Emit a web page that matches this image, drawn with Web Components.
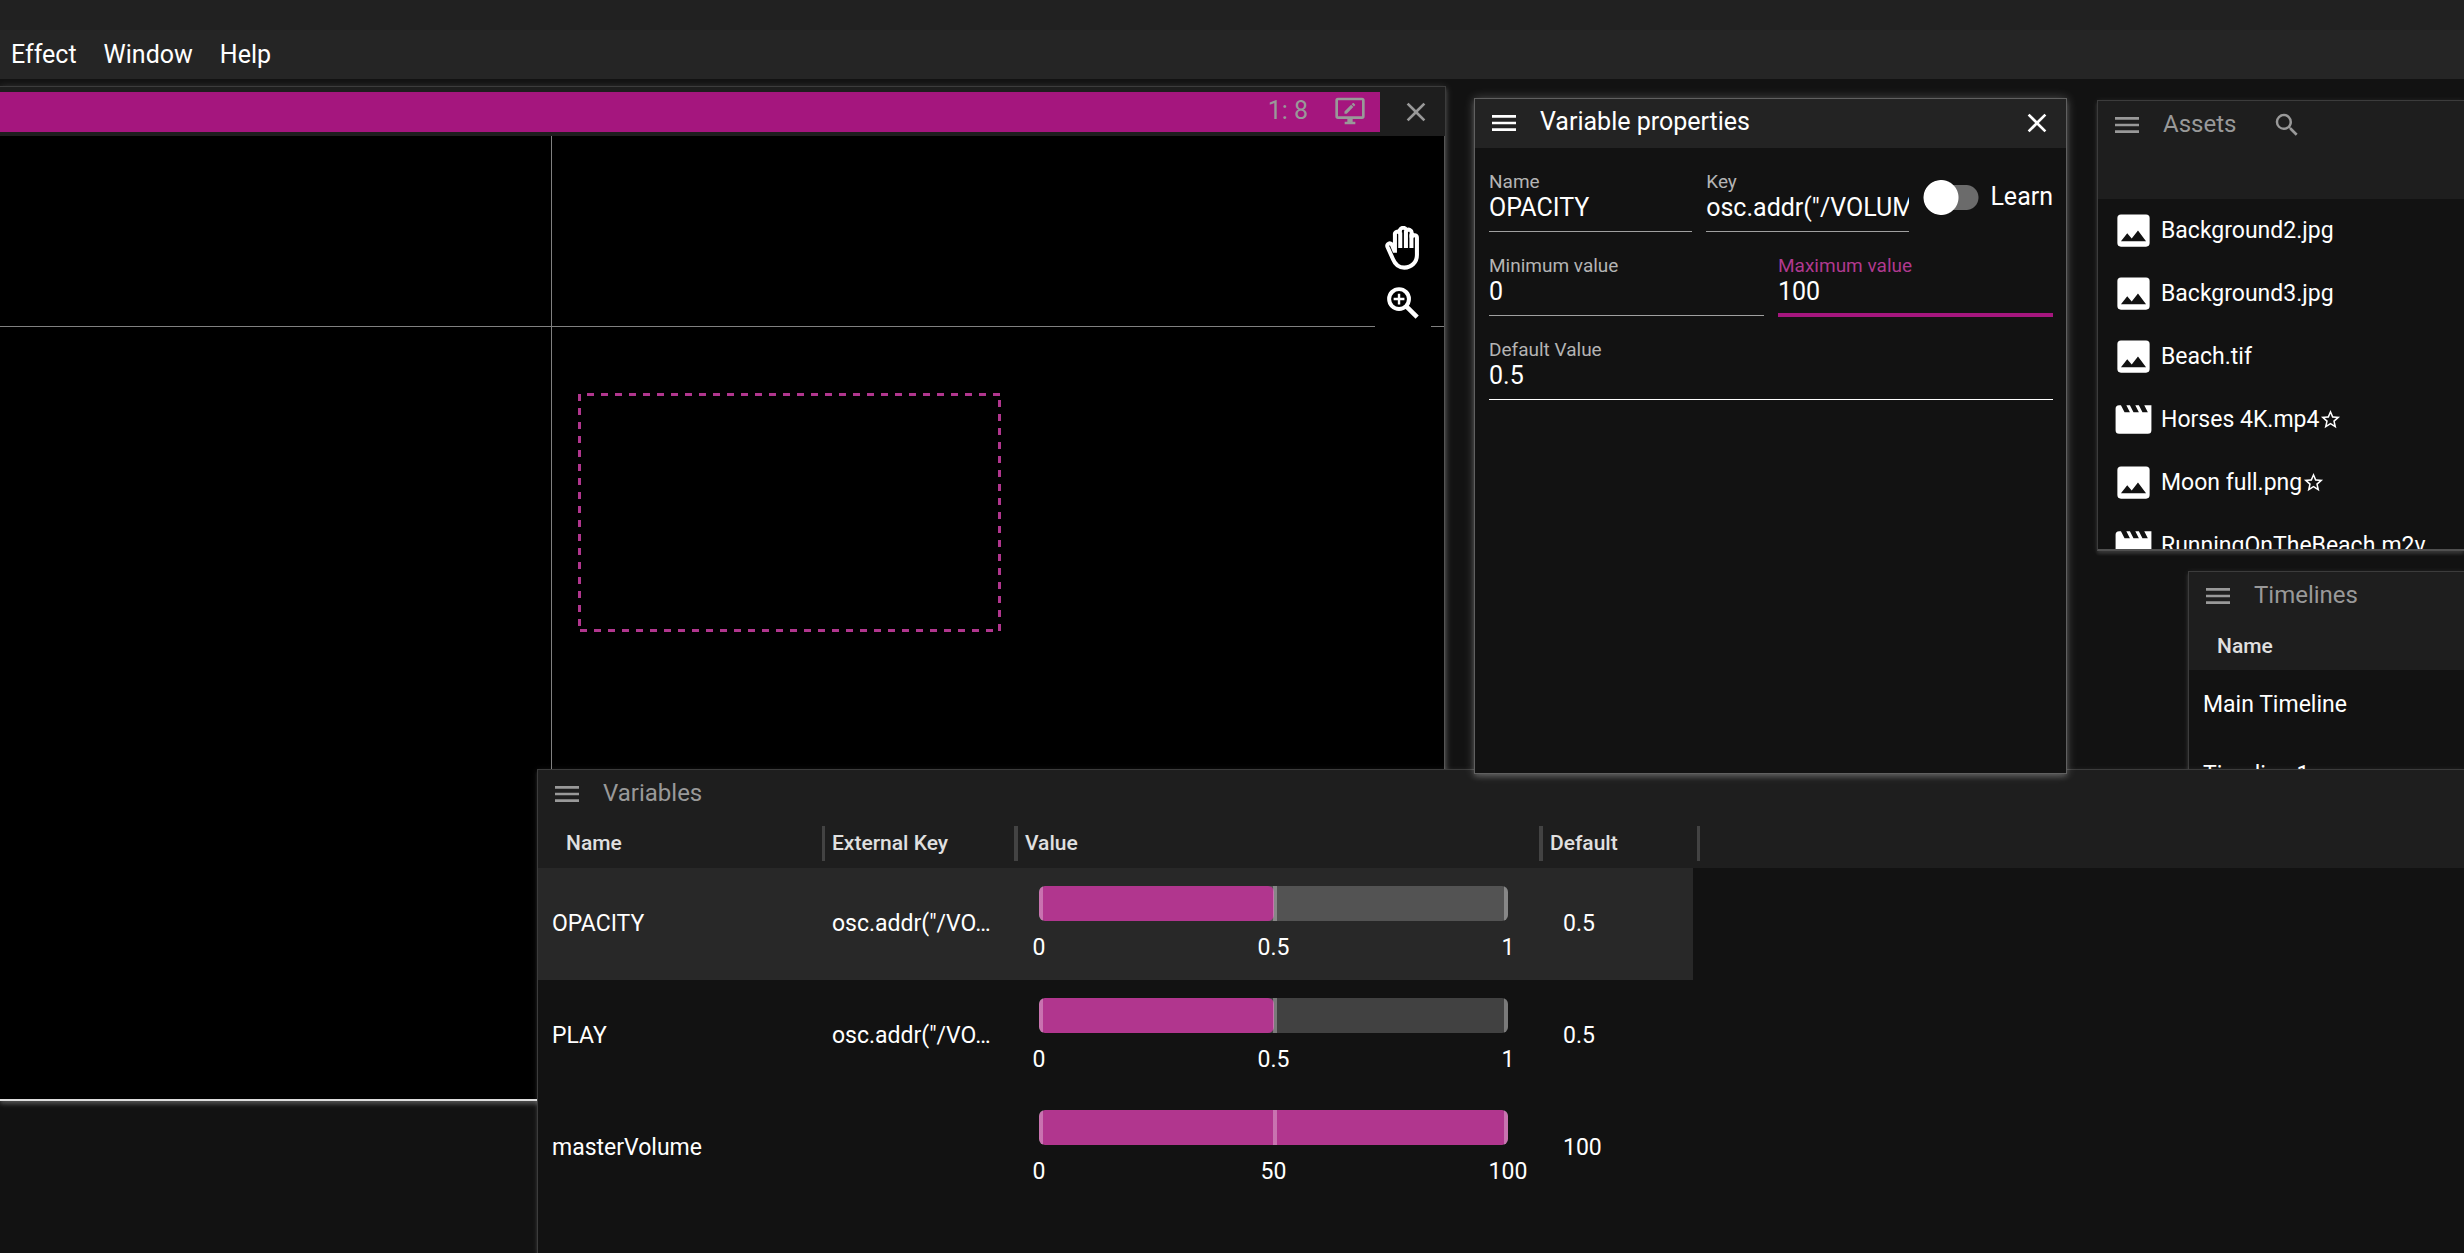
<!DOCTYPE html>
<html lang="en">
<head>
<meta charset="utf-8">
<title>Variables</title>
<style>
html,body{height:100%;margin:0}
body{background:#121212;color:#fff;font-family:Roboto,"Liberation Sans",sans-serif;font-size:23px;overflow:hidden}
</style>
</head>
<body>
<media-app></media-app>
<script>
const define = (name, html, setup) => {
  const tpl = document.createElement('template');
  tpl.innerHTML = html;
  customElements.define(name, class extends HTMLElement {
    connectedCallback() {
      if (this.shadowRoot) return;
      this.attachShadow({mode: 'open'}).appendChild(tpl.content.cloneNode(true));
      if (setup) setup(this, this.shadowRoot);
    }
  });
};

const ICONS = {
  menu: '<path d="M3 6h18v2H3zM3 11h18v2H3zM3 16h18v2H3z"/>',
  close: '<path d="M19 6.41 17.59 5 12 10.59 6.41 5 5 6.41 10.59 12 5 17.59 6.41 19 12 13.41 17.59 19 19 17.59 13.41 12z"/>',
  search: '<path d="M9.5 3A6.5 6.5 0 0 1 16 9.5c0 1.61-.59 3.09-1.56 4.23l.27.27h.79l5 5-1.5 1.5-5-5v-.79l-.27-.27A6.516 6.516 0 0 1 9.5 16a6.5 6.5 0 0 1 0-13m0 2C7 5 5 7 5 9.5S7 14 9.5 14 14 12 14 9.5 12 5 9.5 5z"/>',
  image: '<path d="M8.5 13.5l2.5 3 3.500-4.500 4.500 6H5m16 1V5a2 2 0 0 0-2-2H5a2 2 0 0 0-2 2v14a2 2 0 0 0 2 2h14a2 2 0 0 0 2-2z"/>',
  movie: '<path d="M18 4l2 4h-3l-2-4h-2l2 4h-3l-2-4H8l2 4H7L5 4H4a2 2 0 0 0-2 2v12a2 2 0 0 0 2 2h16a2 2 0 0 0 2-2V4z"/>',
  star: '<path d="M12 15.390l-3.760 2.270.99-4.280-3.320-2.880 4.380-.370L12 6.090l1.710 4.040 4.380.370-3.320 2.880.99 4.280M22 9.240l-7.190-.610L12 2 9.190 8.630 2 9.240l5.450 4.730L5.820 21 12 17.270 18.180 21l-1.640-7.030z"/>',
  screen: '<path d="M21 16H3V4h18m0-2H3a2 2 0 0 0-2 2v12a2 2 0 0 0 2 2h7v2H8v2h8v-2h-2v-2h7a2 2 0 0 0 2-2V4a2 2 0 0 0-2-2z"/><path transform="translate(6.500 4.600) scale(.45)" d="M3 17.250V21h3.750L17.810 9.930l-3.750-3.740zM20.710 7.040a1 1 0 0 0 0-1.410l-2.340-2.340a1 1 0 0 0-1.410 0l-1.830 1.830 3.750 3.750z"/>',
  zoom: '<g fill="none" stroke="currentColor" stroke-width="2.800"><circle cx="9.200" cy="9.200" r="7"/><path stroke-width="3.200" d="M14.500 14.500 22 22"/><path stroke-width="1.700" d="M9.200 5.400v7.600M5.400 9.200h7.600"/></g>',
  hand: '<g fill="none" stroke="currentColor" stroke-width="2.200" stroke-linejoin="round"><path d="M7.600 14.600V4.800a1.500 1.500 0 0 1 2.700-1.100V3a1.800 1.800 0 0 1 3.600-.4 1.600 1.600 0 0 1 2.800 1.300V6a1.500 1.500 0 0 1 2.900.6v9.200c0 4-3 6.900-6.900 6.900-3.100 0-5-1.700-6.200-4.700L3.500 11.300a1.300 1.300 0 0 1 2.500-1l1.600 3.800"/><path d="M10.500 3.500V12M13.600 2.500V12M16.600 4.500V12"/></g>'
};

define('ui-icon', `<style>:host{display:block;flex:none;width:32px;height:32px}svg{display:block;width:100%;height:100%;fill:currentColor}</style><svg viewBox="0 0 24 24" aria-hidden="true"></svg>`,
  (el, root) => { root.querySelector('svg').innerHTML = ICONS[el.getAttribute('name')]; });

define('menu-bar', `<style>
:host{display:block;background:#212121;padding-top:30px}
nav{display:flex;gap:27px;height:49px;align-items:center;padding-left:11px;background:#252525}
button{all:unset;font:400 25px/28px Roboto,sans-serif;color:#fff;cursor:default}
</style><nav><button>Effect</button><button>Window</button><button>Help</button></nav>`);

define('app-window', `<style>
:host{display:flex;flex-direction:column;box-sizing:border-box;position:absolute;background:#121212;border:1px solid #3c3c3c;overflow:hidden;
 --head:#1e1e1e;--ink:#999;box-shadow:0 3px 3px rgba(255,255,255,.1),0 1px 6px rgba(255,255,255,.1)}
:host([active]){--head:#232323;--ink:#fff;border-color:#606060;box-shadow:0 3px 5px rgba(255,255,255,.16),0 0 10px rgba(255,255,255,.24)}
header{flex:none;background:var(--head)}
.bar{display:flex;align-items:center;box-sizing:border-box;height:49px;padding:0 13px 2px;color:var(--ink);font-size:24px;line-height:28px}
button{all:unset;display:block}
h2{font:inherit;margin:0 0 0 20px;padding-bottom:2px}
:host([active]) h2{font-size:25px}
</style><header><div class="bar"><button aria-label="Menu"><ui-icon name="menu"></ui-icon></button><h2></h2><slot name="actions"></slot></div><slot name="sub"></slot></header><slot></slot>`,
  (el, root) => { root.querySelector('h2').textContent = el.getAttribute('heading'); });

define('stage-view', `<style>
:host{display:flex;flex-direction:column;box-sizing:border-box;position:absolute;background:#1e1e1e;border:1px solid #3c3c3c;border-left:0;border-bottom:2px solid #ddd;
 box-shadow:0 3px 4px rgba(255,255,255,.18),0 1px 8px rgba(255,255,255,.16)}
header{display:flex;align-items:center;height:49px;gap:20px;padding-right:13px;color:#999}
.title{flex:1;box-sizing:border-box;height:40px;display:flex;align-items:center;justify-content:flex-end;gap:26px;padding:0 14px 2px 0;background:#a5167e;font-size:25px}
button{all:unset;display:block}
.canvas{flex:1;position:relative;background:#000;overflow:hidden;border-right:1px solid #555}
svg{position:absolute;inset:0;width:100%;height:100%}
.tools{position:absolute;right:13px;top:83px;display:flex;flex-direction:column;align-items:center;gap:16px;box-sizing:border-box;padding-top:7px;width:56px;height:112px;background:#000}
.pan{width:44px;height:44px}
.zoom{width:34px;height:34px}
</style>
<header><div class="title"><span>1: 8</span><ui-icon name="screen"></ui-icon></div><button aria-label="Close"><ui-icon name="close"></ui-icon></button></header>
<div class="canvas"><svg aria-hidden="true"><path d="M551.500 0V2000M0 190.500H2000" stroke="#808080"/><path d="M587 258.500H1000M999.500 264V495M580 494.500H993M579.500 258V433M579.500 441V490" fill="none" stroke="#b1368e" stroke-width="3" stroke-dasharray="7 7"/></svg>
<div class="tools"><button aria-label="Pan"><ui-icon class="pan" name="hand"></ui-icon></button><button aria-label="Zoom in"><ui-icon class="zoom" name="zoom"></ui-icon></button></div></div>`);

define('text-field', `<style>
:host{display:block;flex:1;min-width:0}
label{display:block;font-size:19px;line-height:20px;color:#b4b4b4}
input{display:block;box-sizing:border-box;width:100%;height:40px;margin:0;padding:0 0 9px;border:0;border-bottom:1px solid #a0a0a0;border-radius:0;outline:0;background:none;color:#fff;font:25px Roboto,sans-serif}
:host([strong]) input{border-color:#fff}
:host([focused]) label{color:#b0398f}
:host([focused]) input{height:41px;margin-bottom:-1px;padding-bottom:7px;border-bottom:4px solid #a5167e}
</style><label for="f"></label><input id="f" type="text">`,
  (el, root) => {
    root.querySelector('label').textContent = el.getAttribute('label');
    root.querySelector('input').value = el.getAttribute('value');
  });

define('toggle-switch', `<style>
:host{display:block}
label{display:flex;align-items:center;gap:11px;font-size:25px;line-height:28px;height:50px}
input{appearance:none;margin:0;width:56px;height:35px;display:flex;align-items:center;border-radius:18px;
 background:radial-gradient(circle at 18px 50%,#fff 17px,transparent 18px),linear-gradient(#6b6b6b,#6b6b6b) 18px 5px/26px 25px no-repeat,radial-gradient(circle at 43px 50%,#6b6b6b 12px,transparent 13px)}
</style><label><input type="checkbox"><slot></slot></label>`);

define('asset-item', `<style>
:host{display:flex;align-items:center;height:63px;padding-left:14px;gap:6px;flex:none;white-space:nowrap}
.kind{width:43px;height:43px}
.name{display:flex;align-items:center;line-height:28px}
.star{width:23px;height:23px}
</style><ui-icon class="kind"></ui-icon><div class="name"><slot></slot></div>`,
  (el, root) => {
    root.querySelector('.kind').shadowRoot.querySelector('svg').innerHTML = ICONS[el.getAttribute('kind')];
    if (el.hasAttribute('starred')) {
      const star = document.createElement('ui-icon');
      star.setAttribute('name', 'star');
      star.className = 'star';
      root.querySelector('.name').append(star);
    }
  });

define('value-slider', `<style>
:host{display:block}
.bar{display:grid;height:35px;border-radius:6px;overflow:hidden;background:rgba(255,255,255,.2)}
.bar>*{grid-area:1/1}
.fill{background:#b1368e;border-radius:6px}
input{appearance:none;width:100%;height:35px;margin:0;--t:rgba(255,255,255,.3);
 background:linear-gradient(90deg,var(--t) 4px,transparent 4px,transparent 50%,var(--t) 50%,var(--t) calc(50% + 4px),transparent calc(50% + 4px),transparent calc(100% - 4px),var(--t) calc(100% - 4px))}
input::-webkit-slider-thumb{appearance:none;width:4px;height:35px;background:none}
.scale{display:flex;justify-content:space-between;margin-top:13px;line-height:27px}
.scale span{width:0;display:flex;justify-content:center}
</style><div class="bar"><div class="fill"></div><input type="range" min="0" aria-label="Value"></div><div class="scale"><span></span><span></span><span></span></div>`,
  (el, root) => {
    const max = +el.getAttribute('max'), value = +el.getAttribute('value');
    const input = root.querySelector('input');
    input.max = max; input.step = max / 100; input.value = value;
    root.querySelector('.fill').style.width = value / max * 100 + '%';
    [0, max / 2, max].forEach((n, i) => { root.querySelectorAll('span')[i].textContent = n; });
  });

define('variable-table', `<style>
:host{display:block;background:linear-gradient(#1e1e1e 49px,transparent 49px)}
table{table-layout:fixed;width:1162px;border-collapse:collapse}
th{height:49px;padding:0;text-align:left;font-weight:500;font-size:21px;color:#e0e0e0}
th div{height:35px;line-height:34px;padding-left:7px;border-right:4px solid #434343}
th:first-child div{padding-left:28px;border-right-width:3px}
th:last-child div{border-right-width:3px}
td{height:112px;padding:0 20px 0 7px;line-height:28px;overflow:hidden;text-overflow:ellipsis;white-space:nowrap}
td:first-child{padding-left:14px}
td:nth-child(3){padding:0 35px 0 21px;overflow:visible}
td:nth-child(4){padding-left:20px}
value-slider{margin-top:-1px}
.on td{background:#282828}
</style><table><colgroup><col style="width:287px"><col style="width:193px"><col style="width:525px"><col style="width:150px"><col style="width:7px"></colgroup>
<thead><tr><th><div>Name</div></th><th><div>External Key</div></th><th><div>Value</div></th><th colspan="2"><div>Default</div></th></tr></thead>
<tbody>
<tr class="on"><td>OPACITY</td><td>osc.addr("/VO…</td><td><value-slider max="1" value="0.5"></value-slider></td><td>0.5</td></tr>
<tr><td>PLAY</td><td>osc.addr("/VO…</td><td><value-slider max="1" value="0.5"></value-slider></td><td>0.5</td></tr>
<tr><td>masterVolume</td><td></td><td><value-slider max="100" value="100"></value-slider></td><td>100</td></tr>
</tbody></table>`);

define('timeline-table', `<style>
:host{display:block;background:linear-gradient(#1e1e1e 49px,transparent 49px)}
table{width:100%;border-collapse:collapse}
th{height:49px;padding:0 28px;text-align:left;font-weight:500;font-size:21px;color:#e0e0e0}
td{height:70px;padding:0 14px;line-height:28px}
</style><table><thead><tr><th>Name</th></tr></thead><tbody><tr><td>Main Timeline</td></tr><tr><td>Timeline 1</td></tr></tbody></table>`);

define('media-app', `<style>
:host{display:block;position:relative;height:100vh;overflow:hidden;background:#121212}
stage-view{left:0;top:86px;width:1446px;height:1015px}
#assets{left:2097px;right:0;top:100px;height:451px;border-right:0;border-bottom:2px solid #505050}
#timelines{left:2188px;right:0;top:571px;height:240px;border-right:0}
#variables{left:537px;right:0;top:769px;bottom:0;border-right:0;border-bottom:0}
#props{left:1474px;top:98px;width:593px;height:676px}
#props button,#assets button{all:unset;display:block}
#props button{margin-left:auto}
#assets button{margin-left:36px}
#assets button ui-icon{width:30px;height:30px}
.blank{height:49px}
form{display:flex;flex-direction:column;gap:24px;padding:24px 13px 24px 14px}
form div{display:flex;gap:14px;height:60px}
</style>
<menu-bar></menu-bar>
<stage-view></stage-view>
<app-window id="assets" heading="Assets"><button slot="actions" aria-label="Search"><ui-icon name="search"></ui-icon></button><div slot="sub" class="blank"></div>
<asset-item kind="image">Background2.jpg</asset-item><asset-item kind="image">Background3.jpg</asset-item><asset-item kind="image">Beach.tif</asset-item><asset-item kind="movie" starred>Horses 4K.mp4</asset-item><asset-item kind="image" starred>Moon full.png</asset-item><asset-item kind="movie">RunningOnTheBeach.m2v</asset-item></app-window>
<app-window id="timelines" heading="Timelines"><timeline-table></timeline-table></app-window>
<app-window id="variables" heading="Variables"><variable-table></variable-table></app-window>
<app-window id="props" heading="Variable properties" active><button slot="actions" aria-label="Close"><ui-icon name="close"></ui-icon></button>
<form><div><text-field label="Name" value="OPACITY"></text-field><text-field label="Key" value='osc.addr("/VOLUME")'></text-field><toggle-switch>Learn</toggle-switch></div>
<div><text-field label="Minimum value" value="0"></text-field><text-field label="Maximum value" value="100" focused></text-field></div>
<div><text-field label="Default Value" value="0.5" strong></text-field></div></form></app-window>`);
</script>
</body>
</html>
